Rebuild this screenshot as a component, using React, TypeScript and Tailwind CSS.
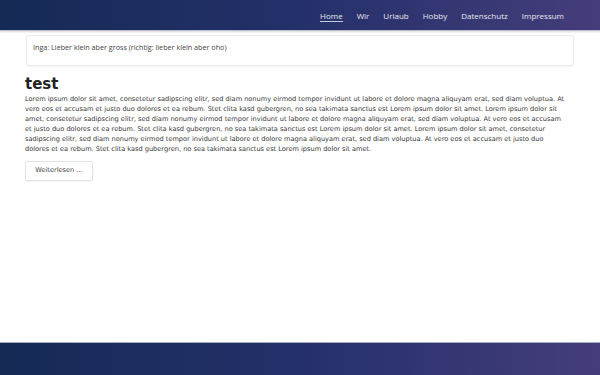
import React from "react";

const lines = [
  "Lorem ipsum dolor sit amet, consetetur sadipscing elitr, sed diam nonumy eirmod tempor invidunt ut labore et dolore magna aliquyam erat, sed diam voluptua. At",
  "vero eos et accusam et justo duo dolores et ea rebum. Stet clita kasd gubergren, no sea takimata sanctus est Lorem ipsum dolor sit amet. Lorem ipsum dolor sit",
  "amet, consetetur sadipscing elitr, sed diam nonumy eirmod tempor invidunt ut labore et dolore magna aliquyam erat, sed diam voluptua. At vero eos et accusam",
  "et justo duo dolores et ea rebum. Stet clita kasd gubergren, no sea takimata sanctus est Lorem ipsum dolor sit amet. Lorem ipsum dolor sit amet, consetetur",
  "sadipscing elitr, sed diam nonumy eirmod tempor invidunt ut labore et dolore magna aliquyam erat, sed diam voluptua. At vero eos et accusam et justo duo",
  "dolores et ea rebum. Stet clita kasd gubergren, no sea takimata sanctus est Lorem ipsum dolor sit amet.",
];

export default function App() {
  const nav = ["Home", "Wir", "Urlaub", "Hobby", "Datenschutz", "Impressum"];
  return (
    <div className="w-[600px] h-[375px] flex flex-col bg-white overflow-hidden">
      <header className="h-[31px] shrink-0 bg-[linear-gradient(90deg,#152a55_0%,#24306a_50%,#443d7b_100%)] border-b border-[#b8bccb] shadow-[0_1px_2px_rgba(0,0,0,0.15)] flex items-center justify-end pr-[36px]">
        <nav className="flex gap-[14px] font-['Open_Sans',sans-serif] text-[8px] text-[#e8e9f2]">
          {nav.map((n) => (
            <span
              key={n}
              className={n === "Home" ? "border-b border-[#c8cbe0] leading-[11px] pt-[1px]" : "leading-[11px] pt-[1px]"}
            >
              {n}
            </span>
          ))}
        </nav>
      </header>
      <main className="flex-1 px-[25px] pt-[4px]">
        <div className="ml-[1px] mr-[1px] h-[31px] border border-[#ececec] rounded-[3px] shadow-[0_1px_2px_rgba(0,0,0,0.06)] px-[6px] pt-[6px] font-['Open_Sans',sans-serif] text-[7.2px] text-[#444]">
          Inga: Lieber klein aber gross (richtig: lieber klein aber oho)
        </div>
        <h1 className="mt-[9px] font-['DejaVu_Sans',sans-serif] font-bold text-[15px] leading-[18px] text-[#222]">
          test
        </h1>
        <p className="mt-[1px] font-['DejaVu_Sans',sans-serif] text-[6.6px] leading-[10px] text-[#383838] whitespace-nowrap">
          {lines.map((l, i) => (
            <React.Fragment key={i}>
              {l}
              {i < lines.length - 1 && <br />}
            </React.Fragment>
          ))}
        </p>
        <button className="mt-[7px] w-[68px] h-[20px] border border-[#e4e4e4] rounded-[2px] bg-white shadow-[0_1px_2px_rgba(0,0,0,0.05)] font-['DejaVu_Sans',sans-serif] text-[6.6px] text-[#444]">
          Weiterlesen ...
        </button>
      </main>
      <footer className="h-[33px] shrink-0 border-t border-[#a8adbd] bg-[linear-gradient(90deg,#152a55_0%,#24306a_50%,#443d7b_100%)]" />
    </div>
  );
}
